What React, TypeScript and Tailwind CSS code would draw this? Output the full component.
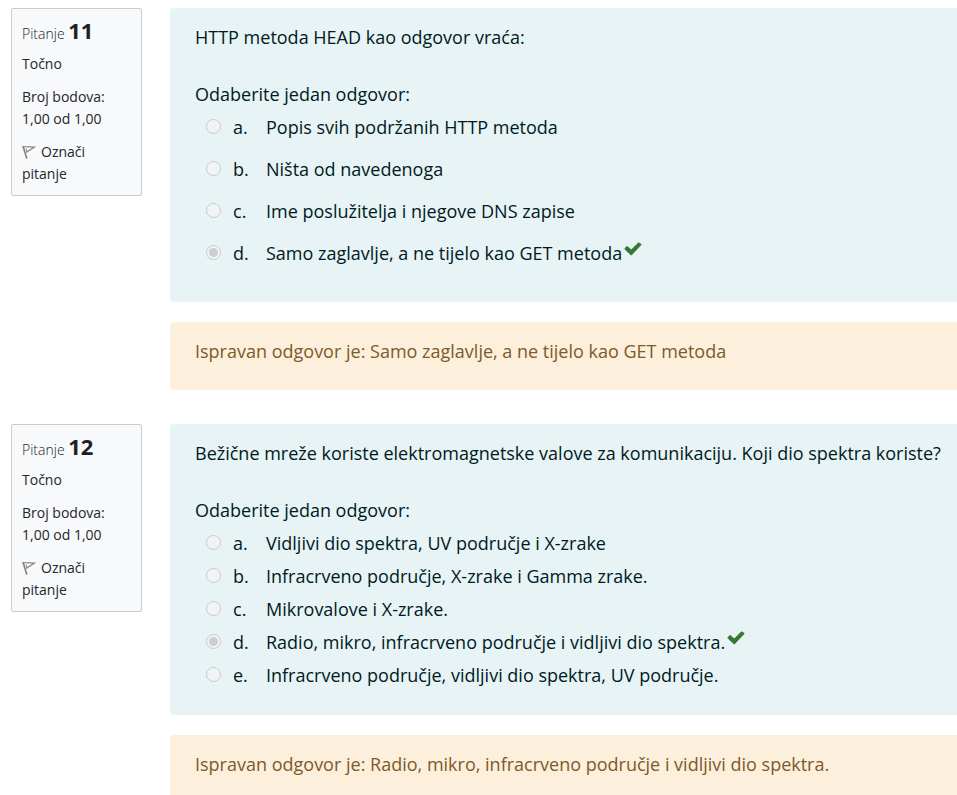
import { useId } from "react";

type Question = {
  number: number;
  text: string;
  spaced: boolean;
  correct: number;
  answers: string[];
};

const questions: Question[] = [
  {
    number: 11,
    text: "HTTP metoda HEAD kao odgovor vraća:",
    spaced: true,
    correct: 3,
    answers: [
      "Popis svih podržanih HTTP metoda",
      "Ništa od navedenoga",
      "Ime poslužitelja i njegove DNS zapise",
      "Samo zaglavlje, a ne tijelo kao GET metoda",
    ],
  },
  {
    number: 12,
    text: "Bežične mreže koriste elektromagnetske valove za komunikaciju. Koji dio spektra koriste?",
    spaced: false,
    correct: 3,
    answers: [
      "Vidljivi dio spektra, UV područje i X-zrake",
      "Infracrveno područje, X-zrake i Gamma zrake.",
      "Mikrovalove i X-zrake.",
      "Radio, mikro, infracrveno područje i vidljivi dio spektra.",
      "Infracrveno područje, vidljivi dio spektra, UV područje.",
    ],
  },
];

function Check() {
  return (
    <svg viewBox="0 0 18 14" className="mb-2 h-[14px] w-[18px] shrink-0" fill="#357a32" role="img" aria-label="Točno">
      <path d="M17.3 3.1 7.9 12.9c-.4.4-.9.4-1.3 0L.8 7.4c-.4-.4-.4-.9 0-1.3L2.5 4.4c.4-.4.9-.4 1.3 0l3.5 3.2L14 .7c.4-.4.9-.4 1.3 0l2 1.4c.3.3.3.7 0 1Z" />
    </svg>
  );
}

function Flag() {
  return (
    <svg viewBox="0 0 14 14" className="mr-[5px] inline-block size-[14px] align-[-2px]" fill="none" stroke="#858585">
      <path d="M1 1 4.8 13.5" strokeWidth="1.7" />
      <path d="M1.5 1.5c3 .8 6 .2 11 .6L4.2 7.6" strokeWidth="1.2" />
      <path d="M4 3.5 5 6.5" strokeWidth="1" />
    </svg>
  );
}

function Info({ number }: { number: number }) {
  return (
    <aside className="w-[131px] shrink-0 self-start rounded-xs border border-[#caced4] bg-[#f8f9fb] p-[10px] text-sm leading-[22px] text-[#23272b]">
      <h3 className="mb-[5px] font-light leading-[28px]">
        Pitanje <span className="text-[22px] leading-[22px] font-bold text-[#1d2125]">{number}</span>
      </h3>
      <div className="mb-[11px]">Točno</div>
      <div className="mb-[11px]">
        Broj bodova:
        <br />
        1,00 od 1,00
      </div>
      <button type="button" className="block text-left">
        <Flag />
        Označi pitanje
      </button>
    </aside>
  );
}

function QuestionBlock({ q }: { q: Question }) {
  const id = useId();
  return (
    <section className="mb-[34px] flex gap-7">
      <Info number={q.number} />
      <div className="min-w-0 flex-1 text-lg leading-[28px]">
        <div className="rounded-l-[4px] bg-[#e7f3f5] pt-[15px] pr-2 pb-[26px] pl-[25px] text-[#001a1e]">
          <p className="mb-[29px]">{q.text}</p>
          <fieldset>
            <legend className="mb-[5px]">Odaberite jedan odgovor:</legend>
            <div className="flex flex-col gap-[5px]">
              {q.answers.map((a, i) => (
                <div key={a} className={q.spaced ? "mb-[9px] flex items-center" : "flex items-center"}>
                  <input
                    type="radio"
                    id={`${id}-${i}`}
                    name={id}
                    disabled
                    defaultChecked={i === q.correct}
                    className="mr-[12px] mb-[2px] ml-[11px] size-[15px] shrink-0"
                  />
                  <label htmlFor={`${id}-${i}`} className="flex">
                    <span className="w-[33px] shrink-0">{"abcde"[i]}.</span>
                    <span>{a}</span>
                  </label>
                  {i === q.correct && (
                    <span className="ml-[2px]">
                      <Check />
                    </span>
                  )}
                </div>
              ))}
            </div>
          </fieldset>
        </div>
        <div className="mt-5 rounded-l-[4px] bg-[#fcefdc] pt-[15px] pr-2 pb-[25px] pl-[25px] text-[#7d5a29]">
          Ispravan odgovor je: {q.answers[q.correct]}
        </div>
      </div>
    </section>
  );
}

export default function App() {
  return (
    <main className="bg-white pt-2 pl-[11px] font-['Open_Sans','Noto_Sans',sans-serif]">
      {questions.map((q) => (
        <QuestionBlock key={q.number} q={q} />
      ))}
    </main>
  );
}
